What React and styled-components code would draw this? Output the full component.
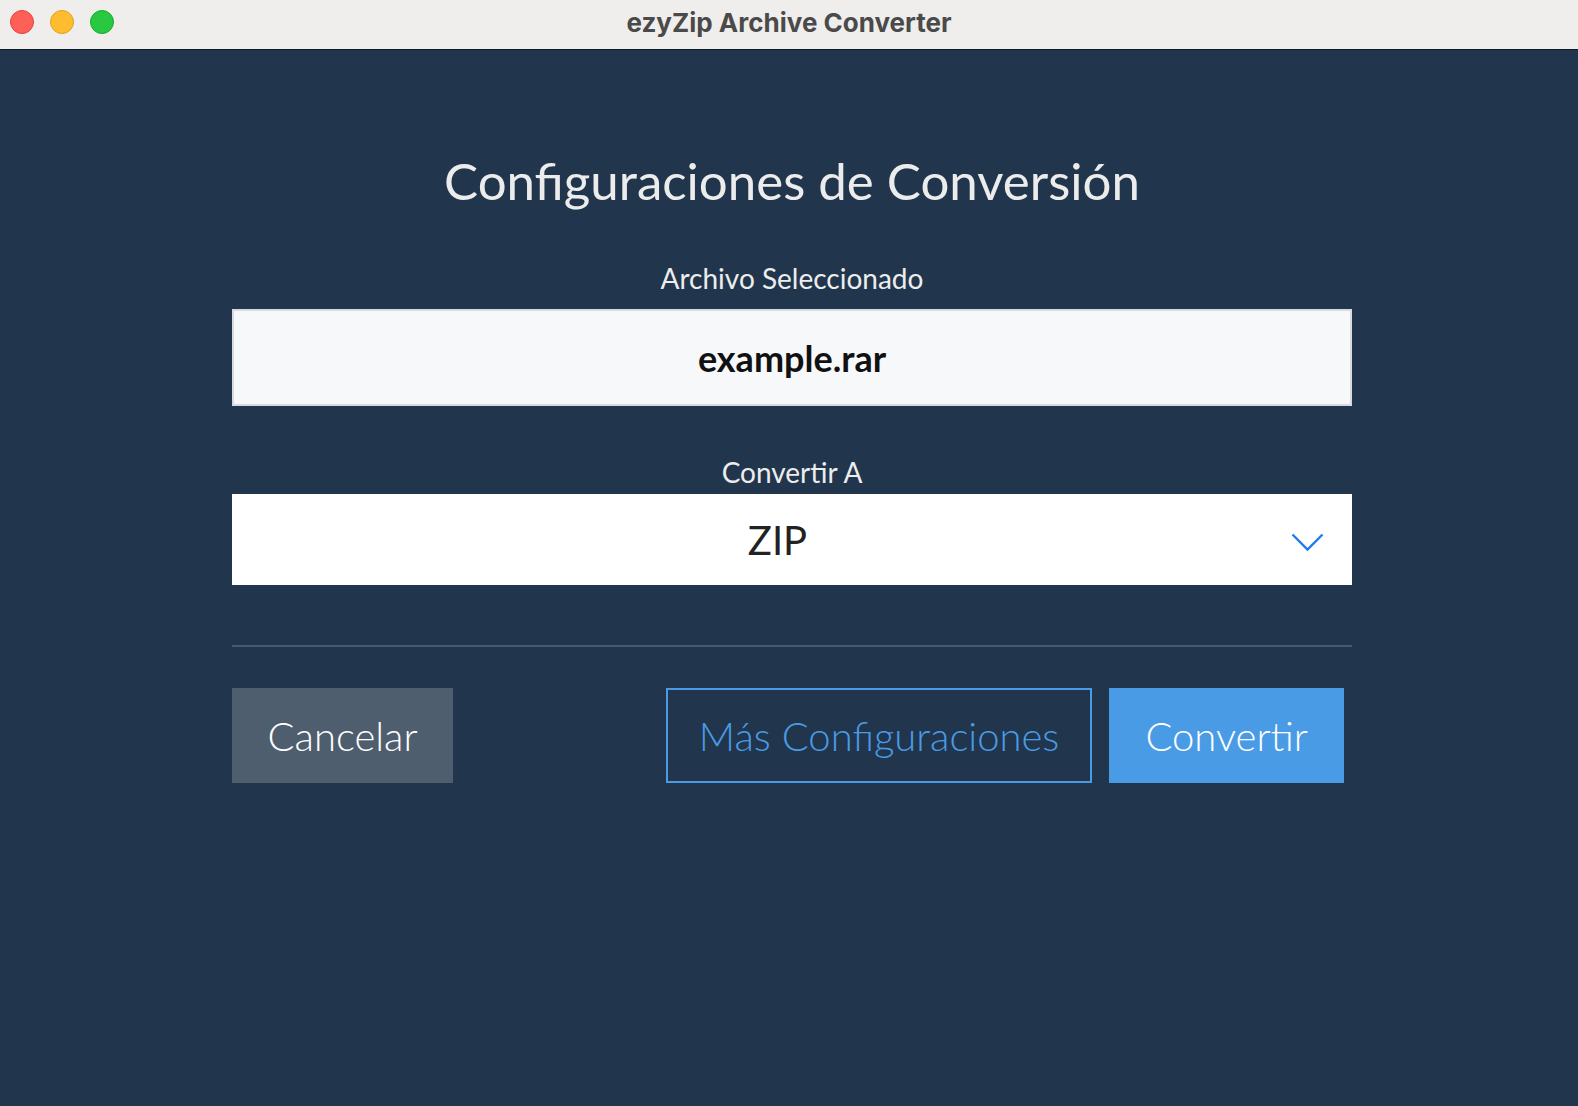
import styled, { createGlobalStyle } from "styled-components";

const GlobalStyle = createGlobalStyle`
    html, body {
        margin: 0;
        padding: 0;
        background: #21364c;
    }

    * {
        box-sizing: border-box;
    }
`;

const Window = styled.div`
    min-height: 100vh;
    display: flex;
    flex-direction: column;
    background: #21364c;
    font-family: "Lato", "Open Sans", sans-serif;
`;

const TitleBar = styled.header`
    height: 50px;
    display: grid;
    grid-template-columns: 1fr auto 1fr;
    align-items: center;
    background: #efeeec;
    border-bottom: 1px solid #111c29;
    padding: 0 10px 5px;
`;

const Lights = styled.div`
    display: flex;
    gap: 16px;
`;

const Light = styled.span`
    width: 24px;
    height: 24px;
    border-radius: 50%;
    background: ${(props) => props.color};
    border: 1px solid ${(props) => props.edge};
`;

const WindowTitle = styled.h1`
    margin: 0;
    font-family: "Inter", "Liberation Sans", Arial, sans-serif;
    font-weight: 700;
    font-size: 26px;
    color: #4a4a4a;
`;

const Main = styled.main`
    display: flex;
    flex-direction: column;
    align-items: center;
    padding: 100px 0 0 6px;
`;

const Panel = styled.section`
    width: 1120px;
    display: flex;
    flex-direction: column;
    align-items: center;
`;

const Heading = styled.h2`
    margin: 0 0 51px;
    font-size: 51px;
    line-height: 62px;
    font-weight: 400;
    color: #ececec;
`;

const Label = styled.label`
    display: block;
    font-size: 28px;
    line-height: 31px;
    color: #ededed;
    margin-bottom: ${(props) => props.gap}px;
`;

const FileBox = styled.div`
    width: 100%;
    height: 97px;
    display: flex;
    align-items: center;
    justify-content: center;
    background: #f7f8fa;
    border: 2px solid #d6dbe2;
    font-size: 36px;
    font-weight: 700;
    color: #111111;
    margin-bottom: 51px;
`;

const SelectBox = styled.div`
    width: 100%;
    height: 91px;
    display: flex;
    align-items: center;
    background: #ffffff;
    padding-left: 32px;
    cursor: pointer;
`;

const SelectValue = styled.span`
    flex: 1;
    text-align: center;
    font-size: 40px;
    color: #222222;
`;

const Chevron = styled.svg`
    width: 33px;
    height: 19px;
    margin: 6px 28px 0 0;
    flex-shrink: 0;
`;

const Divider = styled.hr`
    width: 100%;
    margin: 60px 0 41px;
    border: none;
    border-top: 2px solid #4b5a6a;
`;

const ButtonRow = styled.div`
    width: 100%;
    display: flex;
    justify-content: space-between;
`;

const ButtonGroup = styled.div`
    display: flex;
    gap: 17px;
    margin-right: 8px;
`;

const buttonLook = {
    plain: { bg: "#4e5e6e", fg: "#ffffff", edge: "transparent", pad: 33.5 },
    outline: { bg: "transparent", fg: "#4a9be6", edge: "#4a9be6", pad: 31 },
    primary: { bg: "#4a9be6", fg: "#ffffff", edge: "transparent", pad: 34 },
};

const Button = styled.button`
    height: 95px;
    padding: 0 ${(props) => buttonLook[props.$variant].pad}px;
    font-family: "Lato", sans-serif;
    font-size: 40px;
    font-weight: 300;
    cursor: pointer;
    border: 2px solid ${(props) => buttonLook[props.$variant].edge};
    color: ${(props) => buttonLook[props.$variant].fg};
    background: ${(props) => buttonLook[props.$variant].bg};
`;

const App = () => {
    return (
        <Window>
            <GlobalStyle />
            <TitleBar>
                <Lights>
                    <Light color="#fe5f57" edge="#e0443e" />
                    <Light color="#febc2e" edge="#dea123" />
                    <Light color="#28c840" edge="#1aab29" />
                </Lights>
                <WindowTitle>ezyZip Archive Converter</WindowTitle>
                <div />
            </TitleBar>
            <Main>
                <Panel>
                    <Heading>Configuraciones de Conversión</Heading>
                    <Label gap={15}>Archivo Seleccionado</Label>
                    <FileBox>example.rar</FileBox>
                    <Label gap={6}>Convertir A</Label>
                    <SelectBox>
                        <SelectValue>ZIP</SelectValue>
                        <Chevron viewBox="0 0 33 19" fill="none">
                            <path d="M1.5 1.5 L16.5 16.5 L31.5 1.5" stroke="#1f7bf2" strokeWidth="2.4" />
                        </Chevron>
                    </SelectBox>
                    <Divider />
                    <ButtonRow>
                        <Button $variant="plain">Cancelar</Button>
                        <ButtonGroup>
                            <Button $variant="outline">Más Configuraciones</Button>
                            <Button $variant="primary">Convertir</Button>
                        </ButtonGroup>
                    </ButtonRow>
                </Panel>
            </Main>
        </Window>
    );
};

export default App;
